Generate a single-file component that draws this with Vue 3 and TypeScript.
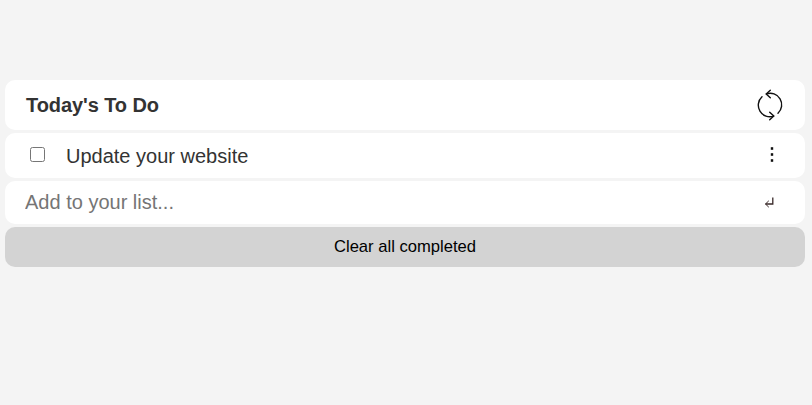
<script setup lang="ts">
import { ref } from 'vue'

interface Task {
  id: number
  description: string
  completed: boolean
}

const tasks = ref<Task[]>([{ id: 1, description: 'Update your website', completed: false }])
const draft = ref('')

function addTask(): void {
  const description = draft.value.trim()
  if (!description) return
  tasks.value.push({ id: Date.now(), description, completed: false })
  draft.value = ''
}

function clearCompleted(): void {
  tasks.value = tasks.value.filter((task) => !task.completed)
}
</script>

<template>
  <main class="todo">
    <header class="row header">
      <h1 class="title">Today's To Do</h1>
      <svg class="refresh" viewBox="0 0 30 32" fill="none" stroke="#111" stroke-width="1.4" stroke-linecap="round" stroke-linejoin="round">
        <path d="M7 7.8A11.5 11.5 0 0 0 18.6 27.1" />
        <path d="M14.7 23.2L18.8 27.1L14.7 30.8" />
        <path d="M23 24.2A11.5 11.5 0 0 0 11.4 4.9" />
        <path d="M15.3 8.8L11.2 4.9L15.3 1.2" />
      </svg>
    </header>
    <div v-for="task in tasks" :key="task.id" class="row item">
      <input v-model="task.completed" class="check" type="checkbox" />
      <span class="text">{{ task.description }}</span>
      <svg class="dots" viewBox="0 0 4 15" fill="#111">
        <rect x=".8" y=".2" width="2.4" height="2.6" />
        <rect x=".8" y="6.2" width="2.4" height="2.6" />
        <rect x=".8" y="12.2" width="2.4" height="2.6" />
      </svg>
    </div>
    <form class="row add" @submit.prevent="addTask">
      <input v-model="draft" class="field" type="text" placeholder="Add to your list..." />
      <svg class="enter" viewBox="0 0 10 11" fill="none" stroke="#3a2a2a" stroke-width="1.3">
        <path d="M8.8 .5V7H1.4" />
        <path d="M4.8 3.8L1.5 7L4.8 10.2" stroke-width="1" />
      </svg>
    </form>
    <button class="clear" type="button" @click="clearCompleted">Clear all completed</button>
  </main>
</template>

<style>
body {
  background: #f4f4f4;
}
</style>

<style scoped>
.todo {
  display: flex;
  flex-direction: column;
  gap: 3px;
  width: 800px;
  margin-left: 5px;
  padding-top: 80px;
  font-family: Arial, "Liberation Sans", sans-serif;
  color: #333;
}

.row {
  display: flex;
  align-items: center;
  box-sizing: border-box;
  background: #fff;
  border-radius: 10px;
}

.header {
  height: 50px;
  padding: 0 20px 0 21px;
  justify-content: space-between;
}

.title {
  margin: 0;
  font-size: 20px;
  line-height: 24px;
  letter-spacing: -0.08px;
}

.refresh {
  width: 30px;
  height: 32px;
}

.item {
  height: 45px;
  padding: 0 31px 0 25px;
}

.check {
  width: 15px;
  height: 15px;
  margin: 0 21px 2px 0;
}

.text {
  flex: 1;
  font-size: 20px;
  line-height: 24px;
}

.dots {
  width: 4px;
  height: 15px;
  margin-bottom: 2px;
}

.add {
  height: 43px;
  padding: 0 31px 2px 20px;
}

.field {
  flex: 1;
  padding: 0;
  border: 0;
  outline: 0;
  background: transparent;
  font: 20px/24px Arial, "Liberation Sans", sans-serif;
}

.field::placeholder {
  color: #757575;
}

.enter {
  width: 10px;
  height: 11px;
  margin-top: 1px;
}

.clear {
  height: 40px;
  padding: 0;
  border: 0;
  border-radius: 10px;
  background: #d3d3d3;
  color: #000;
  font: 16.6px Arial, "Liberation Sans", sans-serif;
}
</style>
